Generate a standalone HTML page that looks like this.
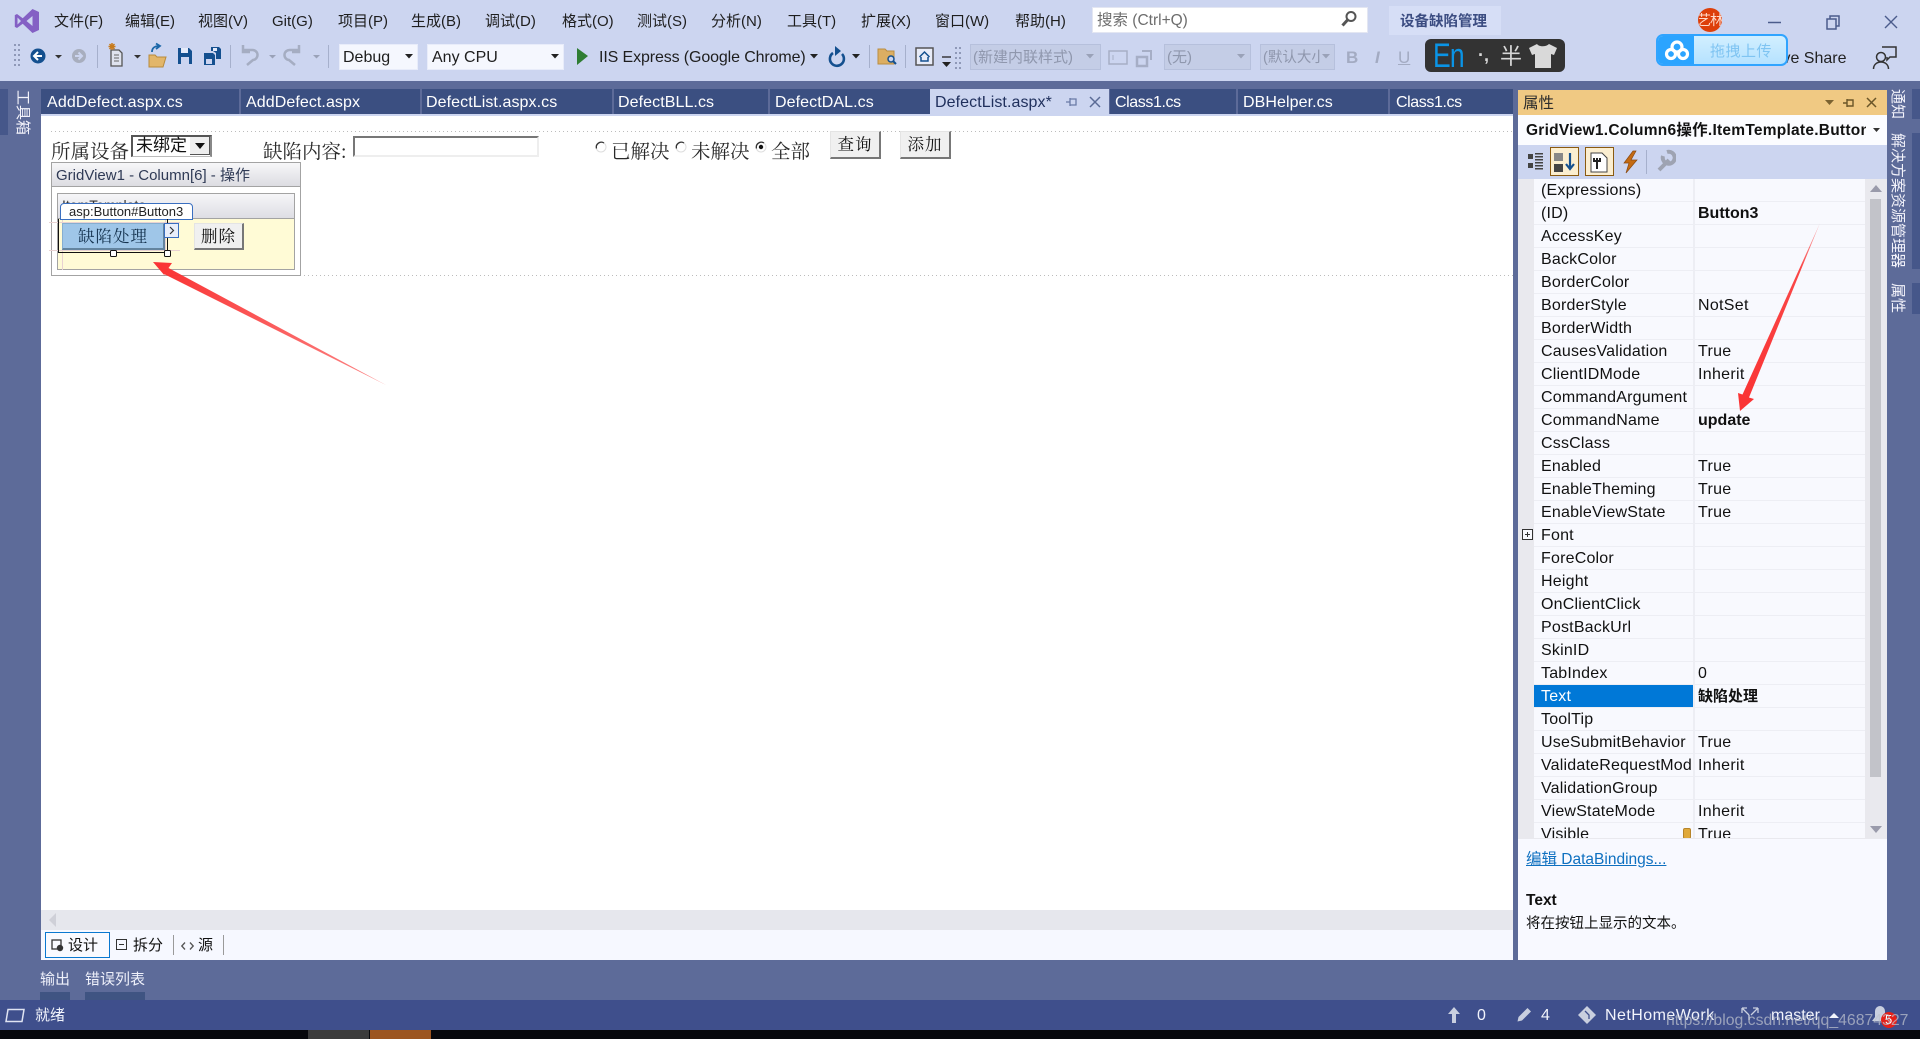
<!DOCTYPE html>
<html lang="zh"><head><meta charset="utf-8"><title>设备缺陷管理</title>
<style>
html,body{margin:0;padding:0;width:1920px;height:1039px;overflow:hidden;background:#5d6b99;font-family:"Liberation Sans","Noto Sans CJK SC",sans-serif;font-size:16px;color:#1e1e1e}
div,span,svg{position:absolute;box-sizing:border-box}
.t{white-space:nowrap;line-height:20px;height:20px;margin-top:1px}
.m{font-size:15px;top:10.500px;color:#1e1e1e}
.tab{position:absolute;top:89px;height:25px;background:#3b4f81}
.tt{top:92px;color:#fff;letter-spacing:.08px}
.se{font-family:"Liberation Serif","Noto Serif CJK SC",serif;font-size:19.500px;color:#2a2a2a;line-height:24px;height:24px;white-space:nowrap;margin-top:2px}
.btn{background:#f0f0f0;border:1px solid #e4e4e4;border-right:2px solid #777;border-bottom:2px solid #777;text-align:center;font-family:"Liberation Serif","Noto Serif CJK SC",serif;color:#111;font-size:16.500px;letter-spacing:1px;line-height:26px}
.row{position:absolute;left:0;width:331px;height:23px;border-bottom:1px solid #edeef4;background:#f8f9fe}
.n{position:absolute;left:7px;top:1px;line-height:22px;white-space:nowrap;letter-spacing:.2px;color:#111}
.v{position:absolute;left:164px;top:1px;line-height:22px;white-space:nowrap;letter-spacing:.3px;color:#111}
.row b{letter-spacing:0}
.vert{writing-mode:vertical-rl;text-orientation:sideways;color:#f3f3fb;font-size:15px;line-height:16px;white-space:nowrap}
.dis{background:#c4cde6;border:1px solid #b6c0dc;color:#8f97ad}
.combo{background:#f5f7fe;border:1px solid #e8ecfa}
.dot{height:1px;background:repeating-linear-gradient(90deg,#bcbcbc 0 1px,transparent 1px 4px)}
</style></head><body>

<!-- top band -->
<div style="left:0;top:0;width:1920px;height:81px;background:#ccd5f0"></div>

<!-- VS logo -->
<svg style="left:14px;top:8px" width="26" height="26" viewBox="0 0 26 26"><path fill="#8460c4" d="M18.500 1 25 4v18l-6.500 3-9.800-9.300L3 20 .8 18.900V7.100L3 6l5.700 4.300zM3.500 9.500v7L7 13zM18.500 8 12.500 13l6 5z"/></svg>

<!-- menu -->
<span class="t m" style="left:54px">文件(F)</span>
<span class="t m" style="left:125px">编辑(E)</span>
<span class="t m" style="left:198px">视图(V)</span>
<span class="t m" style="left:272px">Git(G)</span>
<span class="t m" style="left:338px">项目(P)</span>
<span class="t m" style="left:411px">生成(B)</span>
<span class="t m" style="left:485px">调试(D)</span>
<span class="t m" style="left:562px">格式(O)</span>
<span class="t m" style="left:637px">测试(S)</span>
<span class="t m" style="left:711px">分析(N)</span>
<span class="t m" style="left:787px">工具(T)</span>
<span class="t m" style="left:861px">扩展(X)</span>
<span class="t m" style="left:935px">窗口(W)</span>
<span class="t m" style="left:1015px">帮助(H)</span>

<!-- search -->
<div style="left:1092px;top:7px;width:276px;height:26px;background:#fff;border:1px solid #e3e6f2"></div>
<span class="t" style="left:1097px;top:10px;font-size:15.500px;color:#6d6d6d">搜索 (Ctrl+Q)</span>
<svg style="left:1339px;top:9px" width="20" height="20" viewBox="0 0 20 20"><circle cx="12" cy="7.500" r="4.500" fill="none" stroke="#555" stroke-width="2"/><path d="M8.500 11 3.500 16.500" stroke="#555" stroke-width="3"/></svg>
<div style="left:1389px;top:6px;width:112px;height:29px;background:#d6def6"></div>
<span class="t" style="left:1400px;top:11px;font-weight:bold;font-size:14.500px;color:#3c4d82">设备缺陷管理</span>

<!-- avatar and window controls -->
<div style="left:1698px;top:8px;width:24px;height:24px;border-radius:50%;background:#dd3f0a;overflow:hidden"><span class="t" style="left:-1px;top:1px;color:#ffd9c9;font-size:14px;letter-spacing:-1px">艺林</span></div>
<svg style="left:1760px;top:10px" width="150" height="24" viewBox="0 0 150 24"><path d="M8 12.500H21" stroke="#4b5c8c" stroke-width="1.500"/><path d="M67 9h9v10h-9zM70 9V6h9v10h-3" fill="none" stroke="#4b5c8c" stroke-width="1.500"/><path d="M125 6l12 12M137 6l-12 12" stroke="#4b5c8c" stroke-width="1.400"/></svg>

<!-- toolbar icons left -->
<svg style="left:0;top:40px" width="340" height="32" viewBox="0 0 340 32">
<g fill="#8f99b8"><rect x="14" y="4" width="2" height="2"/><rect x="18" y="4" width="2" height="2"/><rect x="14" y="9" width="2" height="2"/><rect x="18" y="9" width="2" height="2"/><rect x="14" y="14" width="2" height="2"/><rect x="18" y="14" width="2" height="2"/><rect x="14" y="19" width="2" height="2"/><rect x="18" y="19" width="2" height="2"/><rect x="14" y="24" width="2" height="2"/><rect x="18" y="24" width="2" height="2"/></g>
<circle cx="38" cy="16" r="7.500" fill="#14508f"/><path d="M42 16H35M38 12l-4 4 4 4" fill="none" stroke="#fff" stroke-width="2"/>
<path d="M55 15h7l-3.500 3.500z" fill="#333"/>
<circle cx="79" cy="16" r="7" fill="#a8aebe"/><path d="M75 16h7M78.500 12.500 82 16l-3.500 3.500" fill="none" stroke="#ccd5f0" stroke-width="2"/>
<rect x="97" y="5" width="1" height="23" fill="#a6b0cc"/>
<path d="M111 10h8l3 3v13h-11z" fill="#dfe3ef" stroke="#555" stroke-width="1.300"/><path d="M114 15h5M114 18h5M114 21h5" stroke="#666"/><path d="M112 3v7M108.500 6.500h7M109.500 4l5 5M114.500 4l-5 5" stroke="#c77a1a" stroke-width="1.500"/>
<path d="M134 15h7l-3.500 3.500z" fill="#333"/>
<path d="M149 15h6l2 2h9l-3 10h-14z" fill="#e2b66a" stroke="#b88a3b"/><path d="M152 12c0-4 3-6 7-6M156 3.500 160 6l-4 3" fill="none" stroke="#1b67a8" stroke-width="1.800"/>
<path d="M178 8h11l3 3v13h-14z" fill="#14508f"/><rect x="181" y="8" width="7" height="5" fill="#e5ebfa"/><rect x="181" y="17" width="8" height="7" fill="#ccd5f0"/>
<path d="M204 13h9l2 2v10h-11z" fill="#14508f"/><path d="M211 7h8l2 2v10h-5v-6l-3-2h-2z" fill="#14508f"/><rect x="206" y="19" width="6" height="5" fill="#ccd5f0"/><rect x="213" y="8" width="4" height="3" fill="#e5ebfa"/>
<rect x="230" y="5" width="1" height="23" fill="#a6b0cc"/>
<path d="M243 10h9a5 5 0 0 1 1 10l-6 5M243 5v7h7" fill="none" stroke="#a5adc2" stroke-width="2.500"/>
<path d="M269 15h7l-3.500 3.500z" fill="#9aa2b8"/>
<path d="M299 10h-9a5 5 0 0 0-1 10l6 5M299 5v7h-7" fill="none" stroke="#a5adc2" stroke-width="2.500"/>
<path d="M313 15h7l-3.500 3.500z" fill="#9aa2b8"/>
<rect x="328" y="5" width="1" height="23" fill="#a6b0cc"/>
</svg>

<!-- combos -->
<div class="combo" style="left:339px;top:44px;width:79px;height:26px"></div>
<span class="t" style="left:343px;top:47px">Debug</span>
<svg style="left:405px;top:54px" width="9" height="6"><path d="M0 0h8L4 4.500z" fill="#222"/></svg>
<div class="combo" style="left:427px;top:44px;width:137px;height:26px"></div>
<span class="t" style="left:432px;top:47px">Any CPU</span>
<svg style="left:551px;top:54px" width="9" height="6"><path d="M0 0h8L4 4.500z" fill="#222"/></svg>
<svg style="left:576px;top:47px" width="14" height="19"><path d="M1 1l11 8-11 9z" fill="#2f7d33"/></svg>
<span class="t" style="left:599px;top:47px;letter-spacing:-.12px">IIS Express (Google Chrome)</span>
<svg style="left:810px;top:54px" width="9" height="6"><path d="M0 0h8L4 4.500z" fill="#222"/></svg>
<svg style="left:826px;top:45px" width="22" height="24" viewBox="0 0 22 24"><path d="M7 8a7 7 0 1 0 9 1" fill="none" stroke="#14508f" stroke-width="2.600"/><path d="M9 1v10l6-5z" fill="#14508f"/></svg>
<svg style="left:852px;top:54px" width="9" height="6"><path d="M0 0h8L4 4.500z" fill="#222"/></svg>
<div style="left:869px;top:45px;width:1px;height:23px;background:#a6b0cc"></div>
<svg style="left:877px;top:47px" width="20" height="19" viewBox="0 0 20 19"><path d="M1 2h7l2 2h7v13H1z" fill="#dcae62" stroke="#ba8d42"/><circle cx="14" cy="12" r="3" fill="#ccd5f0" stroke="#14508f" stroke-width="1.500"/><path d="M16 14l3 3" stroke="#14508f" stroke-width="2"/></svg>
<div style="left:905px;top:45px;width:1px;height:23px;background:#a6b0cc"></div>
<svg style="left:915px;top:47px" width="19" height="19" viewBox="0 0 19 19"><rect x="1" y="1" width="17" height="17" fill="#e8ecf8" stroke="#555" stroke-width="1.500"/><path d="M4.500 10 9.500 5l5 5M6 10v4h7v-4" fill="none" stroke="#14508f" stroke-width="1.500"/></svg>
<svg style="left:941px;top:56px" width="12" height="14"><path d="M1 1h9" stroke="#222" stroke-width="1.300"/><path d="M1 6h9l-4.500 5z" fill="#222"/></svg>
<svg style="left:955px;top:47px" width="9" height="24"><g fill="#8f99b8"><rect x="0" y="0" width="2" height="2"/><rect x="4" y="0" width="2" height="2"/><rect x="0" y="5" width="2" height="2"/><rect x="4" y="5" width="2" height="2"/><rect x="0" y="10" width="2" height="2"/><rect x="4" y="10" width="2" height="2"/><rect x="0" y="15" width="2" height="2"/><rect x="4" y="15" width="2" height="2"/><rect x="0" y="20" width="2" height="2"/><rect x="4" y="20" width="2" height="2"/></g></svg>
<div class="dis" style="left:970px;top:44px;width:131px;height:26px"></div>
<span class="t" style="left:973px;top:47px;color:#8f97ad;font-size:15px">(新建内联样式)</span>
<svg style="left:1086px;top:54px" width="9" height="6"><path d="M0 0h8L4 4.500z" fill="#9aa2b8"/></svg>
<svg style="left:1107px;top:48px" width="50" height="20" viewBox="0 0 50 20"><rect x="2" y="3" width="18" height="13" fill="none" stroke="#a6aec6" stroke-width="1.500"/><path d="M6 7v5" stroke="#a6aec6"/><path d="M30 9h10v9H30z" fill="none" stroke="#a6aec6" stroke-width="2.500"/><path d="M35 3h9v9" fill="none" stroke="#a6aec6" stroke-width="2"/></svg>
<div class="dis" style="left:1164px;top:44px;width:87px;height:26px"></div>
<span class="t" style="left:1167px;top:47px;color:#8f97ad;font-size:15px">(无)</span>
<svg style="left:1237px;top:54px" width="9" height="6"><path d="M0 0h8L4 4.500z" fill="#9aa2b8"/></svg>
<div class="dis" style="left:1260px;top:44px;width:75px;height:26px;overflow:hidden"></div>
<span class="t" style="left:1263px;top:47px;color:#8f97ad;font-size:14.500px;width:57px;overflow:hidden">(默认大小)</span>
<svg style="left:1322px;top:54px" width="9" height="6"><path d="M0 0h8L4 4.500z" fill="#9aa2b8"/></svg>
<span class="t" style="left:1346px;top:47px;font-weight:bold;font-size:17px;color:#a3abc2">B</span>
<span class="t" style="left:1375px;top:47px;font-style:italic;font-weight:bold;font-size:17px;color:#a3abc2">I</span>
<span class="t" style="left:1398px;top:47px;text-decoration:underline;font-size:17px;color:#a3abc2">U</span>

<!-- sogou bar -->
<div style="left:1425px;top:39px;width:140px;height:33px;background:#333;border-radius:6px"></div>
<span class="t" style="left:1433px;top:41px;height:28px;line-height:28px;font-size:34px;color:#0a94e6;letter-spacing:-1px;transform:scaleX(.78);transform-origin:left center">En</span>
<span class="t" style="left:1478px;top:44px;color:#d8d8d8;font-size:18px;font-weight:bold">·,</span>
<span class="t" style="left:1500px;top:46px;color:#d8d8d8;font-size:22px">半</span>
<svg style="left:1528px;top:43px" width="30" height="26" viewBox="0 0 30 26"><path d="M9 1c2 3 9 3 12 0l8 4-3 7-3-1v14H7V11l-3 1L1 5z" fill="#d9d9d9"/></svg>

<!-- live share & upload widget -->
<span class="t" style="left:1770px;top:48px;color:#222">Live Share</span>
<svg style="left:1872px;top:46px" width="26" height="24" viewBox="0 0 26 24"><path d="M10 1h14v10h-6l-3 3v-3" fill="none" stroke="#333" stroke-width="1.500"/><circle cx="9" cy="11" r="4.500" fill="#ccd5f0" stroke="#333" stroke-width="1.500"/><path d="M1.500 23c0-4 3-7 7.500-7s7.500 3 7.500 7" fill="none" stroke="#333" stroke-width="1.500"/></svg>
<div style="left:1656px;top:34px;width:132px;height:32px;border:2px solid #30a4ff;border-radius:7px;background:linear-gradient(#d2efff,#b5e2ff);overflow:hidden">
<div style="left:0;top:0;width:36px;height:30px;background:#2ba4ff"></div>
<svg style="left:6px;top:4px" width="26" height="22" viewBox="0 0 26 22"><g fill="none" stroke="#fff" stroke-width="3.200"><circle cx="13" cy="7" r="5"/><circle cx="7" cy="14" r="4.500"/><circle cx="19" cy="14" r="4.500"/></g></svg>
<span class="t" style="left:52px;top:5px;color:#7fc4f2;font-size:15px;letter-spacing:.5px">拖拽上传</span>
</div>

<!-- left tool strip -->
<div style="left:0;top:89px;width:8px;height:46px;background:#46578a"></div>
<span class="vert" style="left:14px;top:90px;height:46px">工具箱</span>

<!-- right strip -->
<div style="left:1912px;top:89px;width:8px;height:30px;background:#46578a"></div>
<div style="left:1912px;top:133px;width:8px;height:136px;background:#46578a"></div>
<div style="left:1912px;top:283px;width:8px;height:31px;background:#46578a"></div>
<span class="vert" style="left:1889px;top:89px">通知</span>
<span class="vert" style="left:1889px;top:133px">解决方案资源管理器</span>
<span class="vert" style="left:1889px;top:283px">属性</span>

<!-- tabs -->
<div class="tab" style="left:41px;width:198px"></div>
<div class="tab" style="left:241px;width:179px"></div>
<div class="tab" style="left:422px;width:190px"></div>
<div class="tab" style="left:614px;width:154px"></div>
<div class="tab" style="left:770px;width:160px"></div>
<div class="tab" style="left:930px;width:179px;background:#ccd5f0"></div>
<div class="tab" style="left:1110px;width:126px"></div>
<div class="tab" style="left:1238px;width:150px"></div>
<div class="tab" style="left:1390px;width:123px"></div>
<span class="t tt" style="left:47px;letter-spacing:.15px">AddDefect.aspx.cs</span>
<span class="t tt" style="left:246px">AddDefect.aspx</span>
<span class="t tt" style="left:426px">DefectList.aspx.cs</span>
<span class="t tt" style="left:618px">DefectBLL.cs</span>
<span class="t tt" style="left:775px">DefectDAL.cs</span>
<span class="t tt" style="left:935px;color:#1f2f5c">DefectList.aspx*</span>
<svg style="left:1064px;top:95px" width="44" height="14" viewBox="0 0 44 14"><path d="M2 7h4M6 3v8M6 4h6v6H6" fill="none" stroke="#6a7aa6" stroke-width="1.300"/><path d="M26 2l10 10M36 2 26 12" stroke="#5b6b96" stroke-width="1.500"/></svg>
<span class="t tt" style="left:1115px;letter-spacing:-.4px">Class1.cs</span>
<span class="t tt" style="left:1243px">DBHelper.cs</span>
<span class="t tt" style="left:1396px;letter-spacing:-.4px">Class1.cs</span>

<!-- editor -->
<div style="left:41px;top:114px;width:1472px;height:2px;background:#ccd5f0"></div>
<div style="left:41px;top:116px;width:1472px;height:794px;background:#fff"></div>
<div class="dot" style="left:51px;top:131px;width:1462px"></div>
<div class="dot" style="left:300px;top:275px;width:1213px"></div>

<span class="se" style="left:51px;top:139px">所属设备</span>
<div style="left:131px;top:135px;width:81px;height:22px;background:#fff;border:2px solid #555;border-right:2px solid #888;border-bottom:1px solid #bbb"></div>
<span class="t" style="left:136px;top:135px;font-family:'Liberation Serif','Noto Sans CJK SC',sans-serif;font-size:17px;color:#111">未绑定</span>
<div style="left:190px;top:137px;width:20px;height:18px;background:#eeeeee;border-right:1px solid #555;border-bottom:1px solid #555"></div>
<svg style="left:195px;top:143px" width="11" height="7"><path d="M0 0h10L5 6z" fill="#111"/></svg>
<span class="se" style="left:263px;top:139px">缺陷内容:</span>
<div style="left:353px;top:136px;width:186px;height:21px;background:#fff;border:2px solid #eeeeee;border-top-color:#777;border-left-color:#777"></div>

<svg style="left:594px;top:140px" width="175" height="15" viewBox="0 0 175 15"><g><circle cx="7" cy="7" r="5" fill="#fff" stroke="#ddd"/><path d="M2.500 8.500A5 5 0 0 1 10 3" fill="none" stroke="#333" stroke-width="1.300"/></g><g transform="translate(80 0)"><circle cx="7" cy="7" r="5" fill="#fff" stroke="#ddd"/><path d="M2.500 8.500A5 5 0 0 1 10 3" fill="none" stroke="#333" stroke-width="1.300"/></g><g transform="translate(160 0)"><circle cx="7" cy="7" r="5" fill="#fff" stroke="#ddd"/><path d="M2.500 8.500A5 5 0 0 1 10 3" fill="none" stroke="#333" stroke-width="1.300"/><circle cx="7" cy="7" r="2.200" fill="#111"/></g></svg>
<span class="se" style="left:611px;top:139px">已解决</span>
<span class="se" style="left:691px;top:139px">未解决</span>
<span class="se" style="left:771px;top:139px">全部</span>
<div class="btn" style="left:830px;top:131px;width:51px;height:28px">查询</div>
<div class="btn" style="left:900px;top:131px;width:51px;height:28px">添加</div>

<!-- gridview designer -->
<div style="left:51px;top:162px;width:250px;height:114px;background:#fff;border:1px solid #a3a3a3"></div>
<div style="left:52px;top:163px;width:248px;height:24px;background:linear-gradient(#f7f7f9,#dcdce2);border-bottom:1px solid #a3a3a3"></div>
<span class="t" style="left:56px;top:165px;font-size:15px;color:#2f3a55">GridView1 - Column[6] - 操作</span>
<div style="left:57px;top:193px;width:238px;height:77px;background:#fffbd6;border:1px solid #a3a3a3"></div>
<div style="left:58px;top:194px;width:236px;height:25px;background:linear-gradient(#f6f6f8,#dedee4);border-bottom:1px solid #a3a3a3"></div>
<span class="t" style="left:62px;top:194px;font-size:14px;color:#333;height:9px;overflow:hidden">ItemTemplate</span>
<svg style="left:46px;top:214px" width="140" height="60"><path d="M3 8.500H134M3 36.500H134M16.500 4V56M119.500 4V40" stroke="#e8d2d2" fill="none"/></svg>
<div style="left:60px;top:203px;width:133px;height:17px;background:#fff;border:1px solid #3a6fc0;border-radius:4px 4px 0 0"></div>
<span class="t" style="left:69px;top:201px;font-size:13px;color:#222">asp:Button#Button3</span>
<div style="left:58px;top:219px;width:110px;height:34px;border:1px solid #111;border-top:0"></div>
<div style="left:62px;top:223px;width:103px;height:27px;background:#9fc6e8;border:1px solid #86aed0;border-right:2px solid #63849f;border-bottom:2px solid #63849f;text-align:center;font-family:'Liberation Serif','Noto Serif CJK SC',serif;font-size:16.500px;letter-spacing:1px;line-height:26px;color:#14324e">缺陷处理</div>
<div style="left:164px;top:223px;width:15px;height:15px;background:#e8eefb;border:1px solid #3a6fc0"></div>
<svg style="left:168px;top:226px" width="8" height="9"><path d="M2 1l3.500 3.500L2 8" fill="none" stroke="#333" stroke-width="1.200"/></svg>
<div class="btn" style="left:194px;top:223px;width:50px;height:27px">删除</div>
<div style="left:110px;top:250px;width:7px;height:7px;background:#fff;border:1px solid #111;border-radius:1.500px"></div>
<div style="left:164px;top:250px;width:7px;height:7px;background:#fff;border:1px solid #111;border-radius:1.500px"></div>

<!-- scrollbar + bottom tabs -->
<div style="left:41px;top:910px;width:1472px;height:20px;background:#e6e7ed"></div>
<svg style="left:48px;top:913px" width="9" height="14"><path d="M8 0v14L1 7z" fill="#cfd0d8"/></svg>
<div style="left:41px;top:930px;width:1472px;height:30px;background:#f6f8ff"></div>
<div style="left:45px;top:932px;width:65px;height:26px;border:1.500px solid #0a78d0;background:#f9faff"></div>
<svg style="left:51px;top:939px" width="14" height="14"><rect x="1" y="1" width="9" height="9" fill="none" stroke="#333" stroke-width="1.300"/><circle cx="9" cy="9" r="3.200" fill="#333"/></svg>
<span class="t" style="left:68px;top:935px;font-size:15px;color:#111">设计</span>
<svg style="left:116px;top:939px" width="12" height="12"><rect x=".5" y=".5" width="10" height="10" fill="none" stroke="#333"/><path d="M3 5.500h5" stroke="#333"/></svg>
<span class="t" style="left:133px;top:935px;font-size:15px;color:#111">拆分</span>
<div style="left:173px;top:935px;width:1px;height:20px;background:#9a9a9a"></div>
<svg style="left:181px;top:941px" width="13" height="10"><path d="M4 1.500.8 5 4 8.500M9 1.500 12.200 5 9 8.500" fill="none" stroke="#555" stroke-width="1.300"/></svg>
<span class="t" style="left:198px;top:935px;font-size:15px;color:#111">源</span>
<div style="left:223px;top:935px;width:1px;height:20px;background:#9a9a9a"></div>

<!-- bottom docked tabs -->
<span class="t" style="left:40px;top:969px;font-size:15px;color:#eef0fa">输出</span>
<span class="t" style="left:85px;top:969px;font-size:15px;color:#eef0fa">错误列表</span>
<div style="left:40px;top:992px;width:30px;height:8px;background:#3f5482"></div>
<div style="left:85px;top:992px;width:60px;height:8px;background:#3f5482"></div>

<!-- status bar -->
<div style="left:0;top:1000px;width:1920px;height:30px;background:#3f4f8c"></div>
<div style="left:0;top:1030px;width:1920px;height:9px;background:#07080c"></div>
<div style="left:308px;top:1030px;width:61px;height:9px;background:#3b3b3b"></div>
<div style="left:370px;top:1030px;width:61px;height:9px;background:#9c5520"></div>
<svg style="left:4px;top:1008px" width="22" height="15"><path d="M4 1.500h16L18 13.500H2z" fill="none" stroke="#dfe3f2" stroke-width="1.500"/></svg>
<span class="t" style="left:35px;top:1005px;font-size:15px;color:#f2f4fc">就绪</span>
<svg style="left:1446px;top:1006px" width="16" height="18"><path d="M8 1 14 8H10V17H6V8H2z" fill="#c9cfdf"/></svg>
<span class="t" style="left:1477px;top:1005px;color:#f2f4fc">0</span>
<svg style="left:1516px;top:1006px" width="17" height="17"><path d="M11.500 2 15 5.500 6 14.500 1.500 15.500 2.500 11z" fill="#c9cfdf"/></svg>
<span class="t" style="left:1541px;top:1005px;color:#f2f4fc">4</span>
<svg style="left:1578px;top:1006px" width="18" height="18"><path d="M9 0 18 9 9 18 0 9z" fill="#c9cfdf"/><path d="M7 5l4 4v4" stroke="#3f4f8c" stroke-width="1.300" fill="none"/></svg>
<span class="t" style="left:1605px;top:1005px;color:#f2f4fc;letter-spacing:.45px">NetHomeWork</span>
<svg style="left:1740px;top:1006px" width="20" height="16"><path d="M2 2l7 7M18 2l-7 7M9 9v5M2 2h5M2 2v5M18 2h-5M18 2v5" fill="none" stroke="#c9cfdf" stroke-width="1.300"/></svg>
<span class="t" style="left:1771px;top:1005px;color:#f2f4fc">master</span>
<svg style="left:1829px;top:1012px" width="11" height="7"><path d="M0 6 5 1l5 5z" fill="#f2f4fc"/></svg>
<svg style="left:1871px;top:1005px" width="18" height="20"><path d="M9 1a5 5 0 0 1 5 5v6l3 4H1l3-4V6a5 5 0 0 1 5-5z" fill="#c9cfdf"/></svg>
<div style="left:1881px;top:1012px;width:16px;height:16px;border-radius:50%;background:#e52019"></div>
<span class="t" style="left:1885px;top:1009px;font-size:13px;color:#fff">5</span>
<span class="t" style="left:1666px;top:1010px;font-size:15.800px;color:rgba(190,194,205,.72)">https://blog.csdn.net/qq_46874327</span>

<!-- properties panel -->
<div style="left:1518px;top:90px;width:369px;height:25px;background:#f0c983"></div>
<span class="t" style="left:1523px;top:93px;color:#2d2d2d;font-size:15.500px">属性</span>
<svg style="left:1824px;top:96px" width="58" height="14" viewBox="0 0 58 14"><path d="M1 4h9L5.500 9z" fill="#7b6230"/><path d="M19 7h4M23 3v8M23 4h6v6h-6" fill="none" stroke="#6a5528" stroke-width="1.400"/><path d="M43 2l9 9M52 2l-9 9" stroke="#6a5528" stroke-width="1.500"/></svg>
<div style="left:1518px;top:115px;width:369px;height:30px;background:#fbfcff"></div>
<span class="t" style="left:1526px;top:120px;font-weight:bold;font-size:15.500px;letter-spacing:.25px;color:#111;width:340px;overflow:hidden">GridView1.Column6操作.ItemTemplate.Button3</span>
<svg style="left:1873px;top:128px" width="8" height="5"><path d="M0 0h7L3.500 4z" fill="#333"/></svg>
<div style="left:1518px;top:145px;width:369px;height:34px;background:#ccd5f0"></div>
<svg style="left:1526px;top:147px" width="150" height="30" viewBox="0 0 150 30">
<g fill="#444"><rect x="2" y="7" width="5" height="5"/><rect x="2" y="16" width="5" height="5"/><rect x="9" y="6" width="8" height="1.500"/><rect x="9" y="9" width="8" height="1.500"/><rect x="9" y="12" width="8" height="1.500"/><rect x="9" y="15" width="8" height="1.500"/><rect x="9" y="18" width="8" height="1.500"/><rect x="9" y="21" width="8" height="1.500"/></g>
<rect x="24.500" y=".5" width="28" height="28" fill="#fbeed0" stroke="#8a5a10"/>
<rect x="28" y="6" width="9" height="8" fill="#888"/><rect x="28" y="17" width="9" height="8" fill="#444"/><path d="M44 6v15M40 17l4 5 4-5" fill="none" stroke="#14508f" stroke-width="2.200"/>
<rect x="59.500" y=".5" width="28" height="28" fill="#fbeed0" stroke="#8a5a10"/>
<path d="M65 6h11l5 5v14H65z" fill="#fff" stroke="#444"/><path d="M71 11v11M68 11v3h6v-3" fill="none" stroke="#222" stroke-width="2"/>
<path d="M107 4 98 16h5l-3 10 11-13h-6l5-9z" fill="#c46a12" stroke="#8a4a10" stroke-width=".7"/>
<rect x="120" y="3" width="1" height="24" fill="#a6b0cc"/>
<path d="M133 23l10-10M141 5a6 6 0 1 1-4 4" fill="none" stroke="#9ea3b2" stroke-width="4"/>
</svg>

<!-- grid -->
<div style="left:1518px;top:179px;width:369px;height:661px;background:#e9e9ee"></div>
<div style="left:1534px;top:179px;width:331px;height:659px;overflow:hidden;background:#f8f9fe">
<div class="row" style="top:0"><span class="n">(Expressions)</span></div>
<div class="row" style="top:23px"><span class="n">(ID)</span><span class="v"><b>Button3</b></span></div>
<div class="row" style="top:46px"><span class="n">AccessKey</span></div>
<div class="row" style="top:69px"><span class="n">BackColor</span></div>
<div class="row" style="top:92px"><span class="n">BorderColor</span></div>
<div class="row" style="top:115px"><span class="n">BorderStyle</span><span class="v">NotSet</span></div>
<div class="row" style="top:138px"><span class="n">BorderWidth</span></div>
<div class="row" style="top:161px"><span class="n">CausesValidation</span><span class="v">True</span></div>
<div class="row" style="top:184px"><span class="n">ClientIDMode</span><span class="v">Inherit</span></div>
<div class="row" style="top:207px"><span class="n">CommandArgument</span></div>
<div class="row" style="top:230px"><span class="n">CommandName</span><span class="v"><b>update</b></span></div>
<div class="row" style="top:253px"><span class="n">CssClass</span></div>
<div class="row" style="top:276px"><span class="n">Enabled</span><span class="v">True</span></div>
<div class="row" style="top:299px"><span class="n">EnableTheming</span><span class="v">True</span></div>
<div class="row" style="top:322px"><span class="n">EnableViewState</span><span class="v">True</span></div>
<div class="row" style="top:345px"><span class="n">Font</span></div>
<div class="row" style="top:368px"><span class="n">ForeColor</span></div>
<div class="row" style="top:391px"><span class="n">Height</span></div>
<div class="row" style="top:414px"><span class="n">OnClientClick</span></div>
<div class="row" style="top:437px"><span class="n">PostBackUrl</span></div>
<div class="row" style="top:460px"><span class="n">SkinID</span></div>
<div class="row" style="top:483px"><span class="n">TabIndex</span><span class="v">0</span></div>
<div class="row" style="top:506px"><div style="left:0;top:0;width:159px;height:22px;background:#0078d7"></div><span class="n" style="color:#fff">Text</span><span class="v" style="font-size:15px"><b>缺陷处理</b></span></div>
<div class="row" style="top:529px"><span class="n">ToolTip</span></div>
<div class="row" style="top:552px"><span class="n">UseSubmitBehavior</span><span class="v">True</span></div>
<div class="row" style="top:575px"><span class="n" style="width:151px;overflow:hidden">ValidateRequestMod</span><span class="v">Inherit</span></div>
<div class="row" style="top:598px"><span class="n">ValidationGroup</span></div>
<div class="row" style="top:621px"><span class="n">ViewStateMode</span><span class="v">Inherit</span></div>
<div class="row" style="top:644px"><span class="n">Visible</span><span class="v">True</span><div style="left:149px;top:5px;width:8px;height:11px;background:#e0a93a;border:1px solid #b6842a;border-radius:2px"></div></div>
<div style="left:159px;top:0;width:2px;height:659px;background:#edeef4"></div>
</div>
<svg style="left:1522px;top:529px" width="12" height="12"><rect x=".5" y=".5" width="10" height="10" fill="#f8f9fe" stroke="#333"/><path d="M3 5.500h5M5.500 3v5" stroke="#333"/></svg>
<svg style="left:1869px;top:184px" width="14" height="9"><path d="M1 8 7 1l6 7z" fill="#9a9bab"/></svg>
<div style="left:1870px;top:199px;width:11px;height:578px;background:#c2c3c9"></div>
<svg style="left:1869px;top:825px" width="14" height="9"><path d="M1 1h12L7 8z" fill="#9a9bab"/></svg>

<!-- help area -->
<div style="left:1518px;top:839px;width:369px;height:121px;background:#f8f9ff"></div>
<span class="t" style="left:1526px;top:849px;font-size:15.500px;color:#0e70c0;text-decoration:underline">编辑 DataBindings...</span>
<span class="t" style="left:1526px;top:890px;font-weight:bold;font-size:15.500px;color:#111">Text</span>
<span class="t" style="left:1526px;top:913px;font-size:14.500px;color:#111">将在按钮上显示的文本。</span>

<!-- red annotation arrows -->
<svg style="left:0;top:0" width="1920" height="1039" viewBox="0 0 1920 1039">
<defs><linearGradient id="g1" gradientUnits="userSpaceOnUse" x1="160" y1="268" x2="386" y2="384"><stop offset="0" stop-color="#fa3434"/><stop offset="1" stop-color="#fa3434" stop-opacity=".6"/></linearGradient>
<linearGradient id="g2" gradientUnits="userSpaceOnUse" x1="1745" y1="400" x2="1820" y2="223"><stop offset="0" stop-color="#fa3434"/><stop offset=".75" stop-color="#fa3434" stop-opacity=".9"/><stop offset="1" stop-color="#fa3434" stop-opacity=".35"/></linearGradient></defs>
<path d="M153 262 172 263 168.500 268 386 385 164 274 165 276z" fill="url(#g1)"/>
<path d="M1740 411 1738 393 1742.500 394.500 1820 223 1749 397.500 1754 399z" fill="url(#g2)"/>
</svg>
</body></html>
